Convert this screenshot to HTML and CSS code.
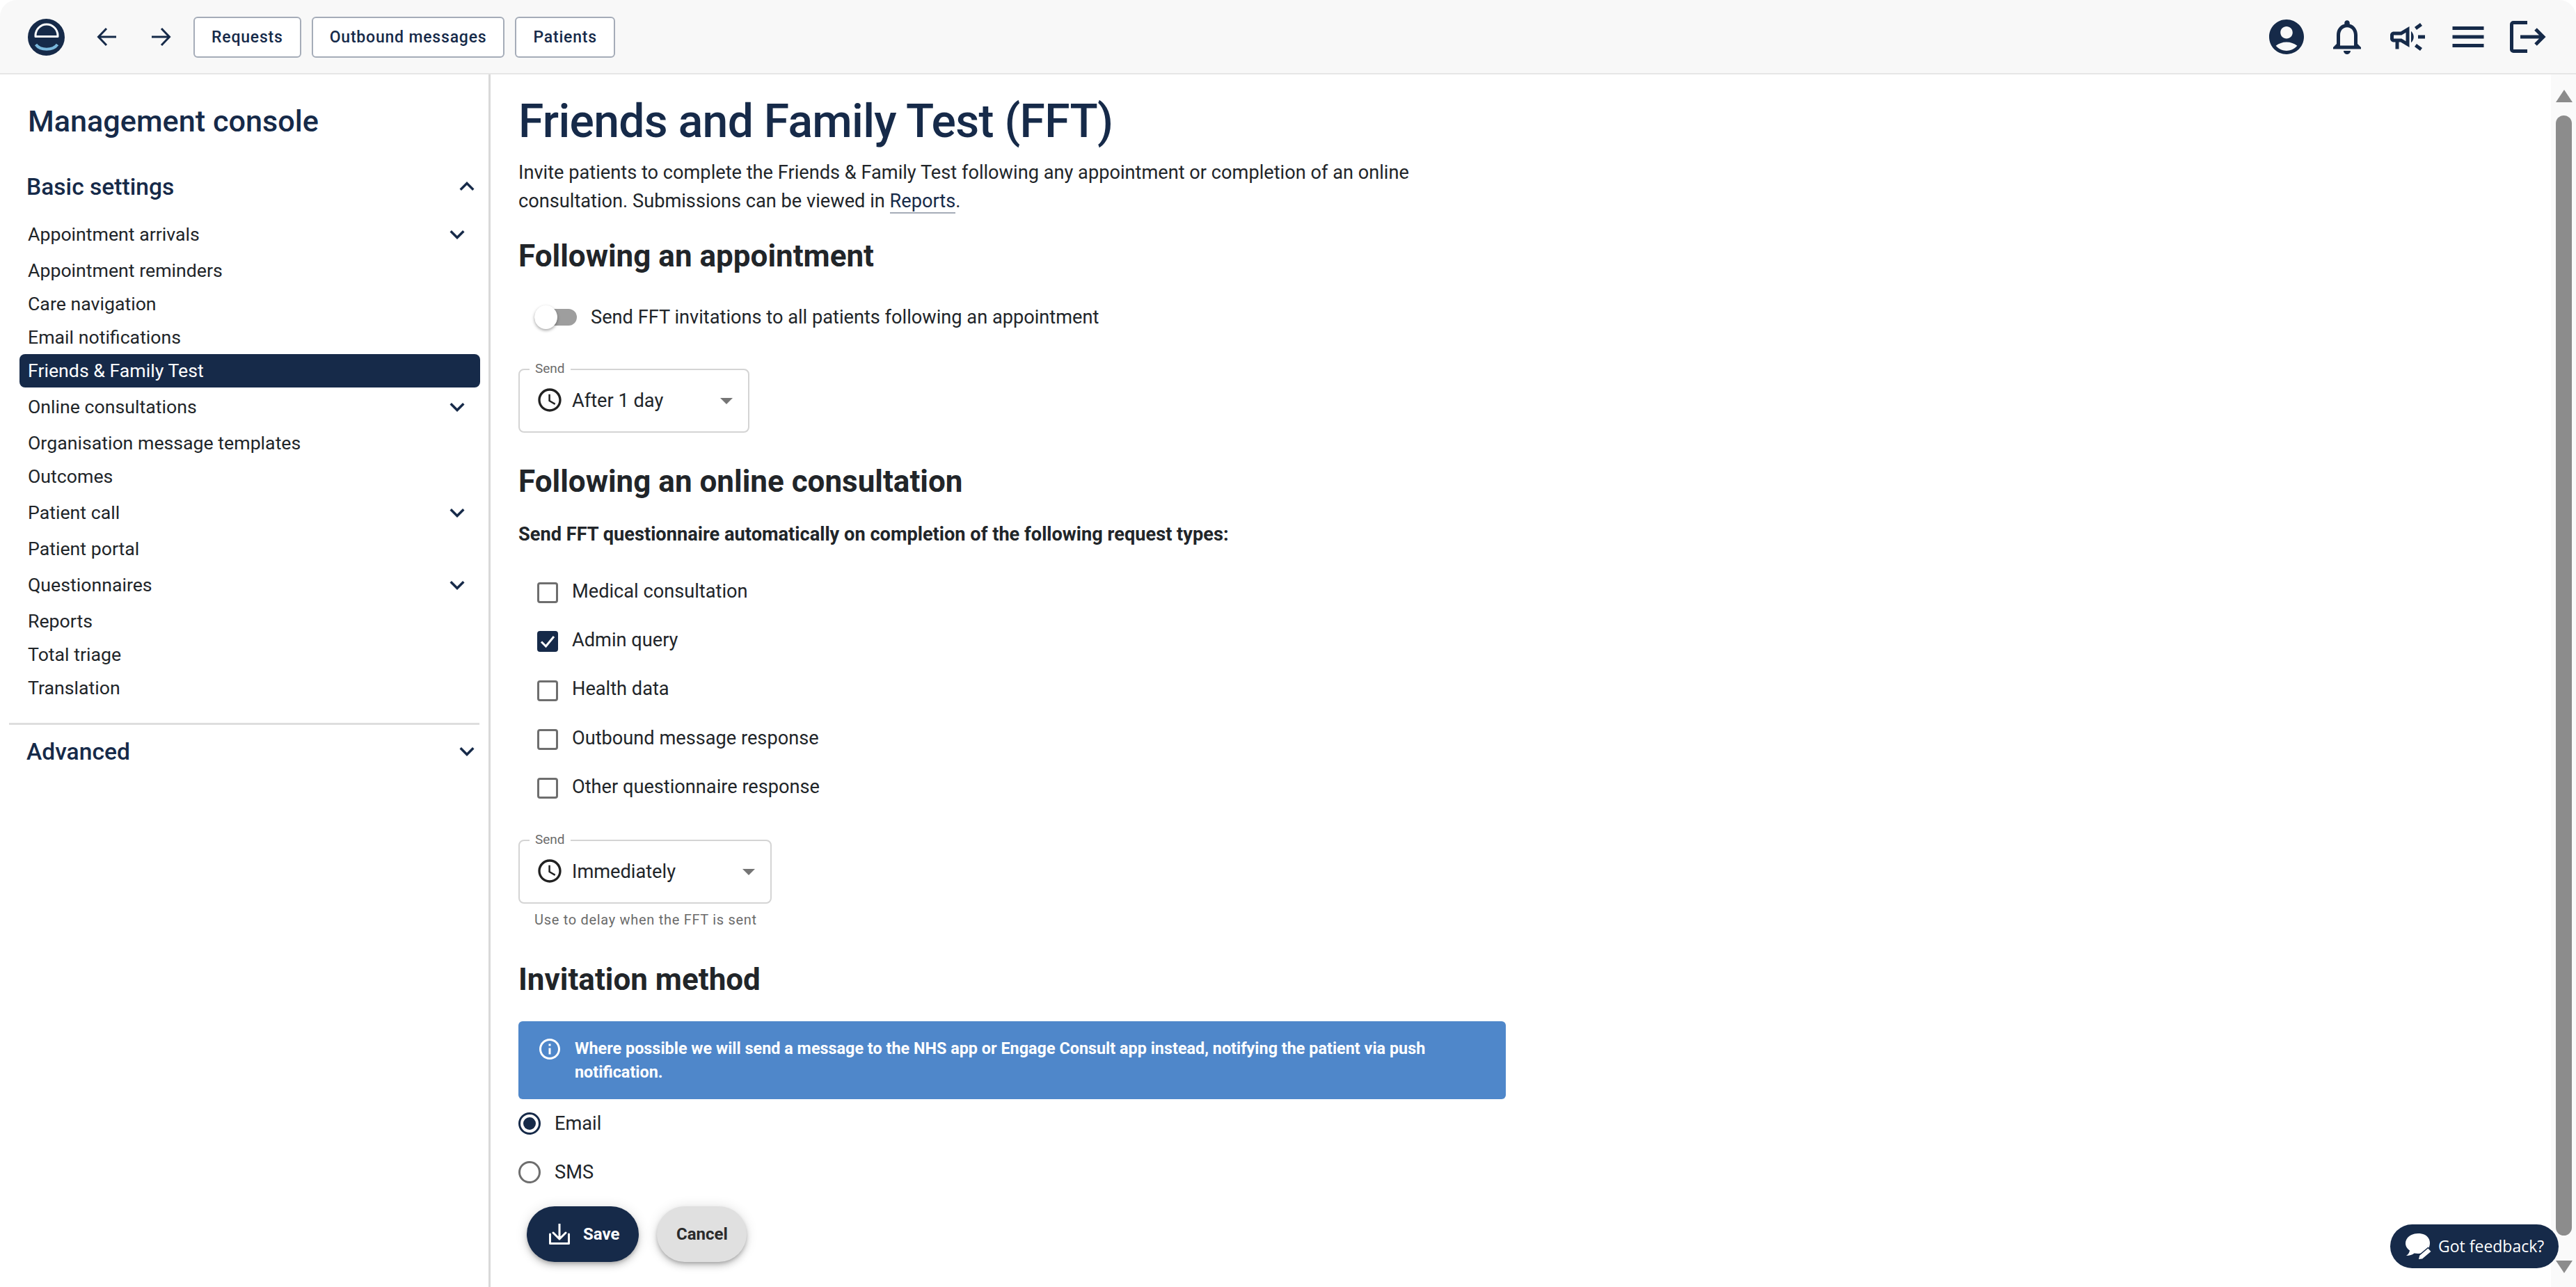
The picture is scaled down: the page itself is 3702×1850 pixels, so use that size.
FILE: index.html
```html
<!DOCTYPE html>
<html lang="en">
<head>
    <meta charset="UTF-8">
    <meta name="viewport" content="width=device-width, initial-scale=1.0">
    <title>Friends and Family Test (FFT)</title>
    <link rel="stylesheet" href="styles.css">
</head>
<body>
<div class="app">
    <header class="toolbar">
        <svg class="logo" viewBox="0 0 53 53">
            <circle cx="26.5" cy="26.5" r="26.5" fill="#162a49"/>
            <path d="M11 25.500V24A16 16 0 0 1 43 24V25.500Z" fill="none" stroke="#fff" stroke-width="3" stroke-linejoin="round"/>
            <path d="M11.500 37C18 46 36 46 42.500 37" fill="none" stroke="#7ab8dc" stroke-width="4"/>
        </svg>
        <svg class="nav-arrow" viewBox="0 0 30 28"><path d="M28 14H3M14 2 2.500 14 14 26" fill="none" stroke="#162a49" stroke-width="3"/></svg>
        <svg class="nav-arrow" viewBox="0 0 30 28"><path d="M2 14h25M16 2l11.500 12L16 26" fill="none" stroke="#162a49" stroke-width="3"/></svg>
        <div class="quick-links">
            <a class="quick-link">Requests</a>
            <a class="quick-link">Outbound messages</a>
            <a class="quick-link">Patients</a>
        </div>
        <div class="toolbar-icons">
            <svg class="top-icon" viewBox="0 0 24 24"><path d="M12 2C6.48 2 2 6.48 2 12s4.48 10 10 10 10-4.48 10-10S17.52 2 12 2zm0 4c1.93 0 3.500 1.570 3.500 3.500S13.930 13 12 13s-3.500-1.570-3.500-3.500S10.070 6 12 6zm0 14c-2.030 0-4.430-.820-6.140-2.880C7.550 15.800 9.680 15 12 15s4.450.800 6.140 2.120C16.430 19.180 14.030 20 12 20z"/></svg>
            <svg class="top-icon" viewBox="0 0 24 24"><path d="M12 22c1.100 0 2-.900 2-2h-4c0 1.100.900 2 2 2zm6-6v-5c0-3.070-1.630-5.640-4.500-6.320V4c0-.830-.670-1.500-1.500-1.500s-1.500.670-1.500 1.500v.680C7.640 5.360 6 7.920 6 11v5l-2 2v1h16v-1l-2-2zm-2 1H8v-6c0-2.480 1.510-4.500 4-4.500s4 2.020 4 4.500v6z"/></svg>
            <svg class="top-icon" viewBox="0 0 24 24"><path d="M18 11v2h4v-2h-4zm-2 6.610c.960.710 2.210 1.650 3.200 2.390.400-.530.800-1.070 1.200-1.600-.990-.740-2.240-1.680-3.200-2.400-.400.540-.800 1.080-1.200 1.610zM20.400 5.600c-.400-.530-.800-1.070-1.200-1.600-.990.740-2.240 1.680-3.200 2.400.400.530.800 1.070 1.200 1.600.960-.720 2.210-1.650 3.200-2.400zM4 9c-1.100 0-2 .900-2 2v2c0 1.100.900 2 2 2h1v4h2v-4h1l5 3V6L8 9H4zm5.030 1.710L11 9.530v4.940l-1.970-1.180-.480-.290H4v-2h4.550l.480-.290zM15.500 12c0-1.330-.580-2.530-1.500-3.350v6.690c.920-.810 1.500-2.010 1.500-3.340z"/></svg>
            <svg class="top-icon" viewBox="0 0 24 24"><path d="M3 18h18v-2H3v2zm0-5h18v-2H3v2zm0-7v2h18V6H3z"/></svg>
            <svg class="logout-icon" viewBox="0 0 52 46"><path d="M25 2.500H5a2.500 2.500 0 0 0-2.500 2.500v36A2.500 2.500 0 0 0 5 43.500h20M15 23h33M37 12l11 11-11 11" fill="none" stroke="#162a49" stroke-width="5"/></svg>
        </div>
    </header>

    <div class="workspace">
        <aside class="sidebar">
            <div class="sidebar-title">Management console</div>
            <div class="section-head">
                <span>Basic settings</span>
                <svg class="chevron" viewBox="0 0 24 24"><path d="M7.410 15.410 12 10.830l4.590 4.580L18 14l-6-6-6 6z"/></svg>
            </div>
            <div class="menu">
                <div class="menu-item has-children">Appointment arrivals<svg class="chevron" viewBox="0 0 24 24"><path d="M16.590 8.590 12 13.170 7.410 8.590 6 10l6 6 6-6z"/></svg></div>
                <div class="menu-item">Appointment reminders</div>
                <div class="menu-item">Care navigation</div>
                <div class="menu-item">Email notifications</div>
                <div class="menu-item active">Friends &amp; Family Test</div>
                <div class="menu-item has-children">Online consultations<svg class="chevron" viewBox="0 0 24 24"><path d="M16.590 8.590 12 13.170 7.410 8.590 6 10l6 6 6-6z"/></svg></div>
                <div class="menu-item">Organisation message templates</div>
                <div class="menu-item">Outcomes</div>
                <div class="menu-item has-children">Patient call<svg class="chevron" viewBox="0 0 24 24"><path d="M16.590 8.590 12 13.170 7.410 8.590 6 10l6 6 6-6z"/></svg></div>
                <div class="menu-item">Patient portal</div>
                <div class="menu-item has-children">Questionnaires<svg class="chevron" viewBox="0 0 24 24"><path d="M16.590 8.590 12 13.170 7.410 8.590 6 10l6 6 6-6z"/></svg></div>
                <div class="menu-item">Reports</div>
                <div class="menu-item">Total triage</div>
                <div class="menu-item">Translation</div>
            </div>
            <div class="sidebar-divider"></div>
            <div class="section-head advanced">
                <span>Advanced</span>
                <svg class="chevron" viewBox="0 0 24 24"><path d="M16.590 8.590 12 13.170 7.410 8.590 6 10l6 6 6-6z"/></svg>
            </div>
        </aside>

        <main class="content">
            <h1>Friends and Family Test (FFT)</h1>
            <p class="intro">Invite patients to complete the Friends &amp; Family Test following any appointment or completion of an online<br>consultation. Submissions can be viewed in <a class="link">Reports</a>.</p>

            <h2 class="first-heading">Following an appointment</h2>
            <div class="toggle-row">
                <span class="toggle"><span class="toggle-thumb"></span></span>
                <span>Send FFT invitations to all patients following an appointment</span>
            </div>
            <div class="select select-short">
                <span class="select-label">Send</span>
                <svg class="clock" viewBox="0 0 24 24"><path d="M11.990 2C6.470 2 2 6.480 2 12s4.470 10 9.990 10C17.520 22 22 17.520 22 12S17.520 2 11.990 2zM12 20c-4.420 0-8-3.580-8-8s3.580-8 8-8 8 3.580 8 8-3.580 8-8 8zm.500-13H11v6l5.250 3.150.750-1.230-4.500-2.670z"/></svg>
                <span class="select-value">After 1 day</span>
                <span class="caret"></span>
            </div>

            <h2 class="online-heading">Following an online consultation</h2>
            <p class="lead">Send FFT questionnaire automatically on completion of the following request types:</p>
            <div class="checks">
                <div class="check-row"><span class="checkbox"></span><span class="check-label">Medical consultation</span></div>
                <div class="check-row"><span class="checkbox checked"><svg viewBox="0 0 24 24"><path d="M3 12.500 9.500 19 21 5" fill="none" stroke="#fff" stroke-width="3"/></svg></span><span class="check-label">Admin query</span></div>
                <div class="check-row"><span class="checkbox"></span><span class="check-label">Health data</span></div>
                <div class="check-row"><span class="checkbox"></span><span class="check-label">Outbound message response</span></div>
                <div class="check-row"><span class="checkbox"></span><span class="check-label">Other questionnaire response</span></div>
            </div>
            <div class="select select-long">
                <span class="select-label">Send</span>
                <svg class="clock" viewBox="0 0 24 24"><path d="M11.990 2C6.470 2 2 6.480 2 12s4.470 10 9.990 10C17.520 22 22 17.520 22 12S17.520 2 11.990 2zM12 20c-4.420 0-8-3.580-8-8s3.580-8 8-8 8 3.580 8 8-3.580 8-8 8zm.500-13H11v6l5.250 3.150.750-1.230-4.500-2.670z"/></svg>
                <span class="select-value">Immediately</span>
                <span class="caret"></span>
            </div>
            <div class="hint">Use to delay when the FFT is sent</div>

            <h2 class="method-heading">Invitation method</h2>
            <div class="banner">
                <svg class="info-icon" viewBox="0 0 24 24"><path d="M11 7h2v2h-2zm0 4h2v6h-2zm1-9C6.480 2 2 6.480 2 12s4.480 10 10 10 10-4.480 10-10S17.520 2 12 2zm0 18c-4.410 0-8-3.590-8-8s3.590-8 8-8 8 3.590 8 8-3.590 8-8 8z"/></svg>
                <span>Where possible we will send a message to the NHS app or Engage Consult app instead, notifying the patient via push notification.</span>
            </div>
            <div class="radio-row"><span class="radio selected"></span><span>Email</span></div>
            <div class="radio-row"><span class="radio"></span><span>SMS</span></div>
            <div class="actions">
                <button class="btn btn-save" type="button">
                    <svg class="save-icon" viewBox="0 0 30 30"><path d="M1.500 15v13.500h27V15M15 0v22M6 13l9 9 9-9" fill="none" stroke="#fff" stroke-width="3" stroke-linecap="round" stroke-linejoin="round"/></svg>
                    Save
                </button>
                <button class="btn btn-cancel" type="button">Cancel</button>
            </div>
        </main>

        <div class="scrollbar">
            <span class="scroll-up"></span>
            <span class="scroll-thumb"></span>
            <span class="scroll-down"></span>
        </div>
    </div>

    <a class="feedback">
        <svg class="feedback-icon" viewBox="0 0 40 40">
            <path d="M20 1C9.500 1 2 7.500 2 15c0 4.500 2.500 8 6 10.500C7.500 28.500 6 31 3 33c5 0 9-1.500 11.500-3.500 1.800.300 3.500.500 5.500.500 10.500 0 17-6.500 17-15S30.500 1 20 1z" fill="#fff"/>
            <path d="M20 39l1.500-6.500 13-11 5 5.500-13 11z" fill="#fff" stroke="#162a49" stroke-width="1.500"/>
        </svg>
        Got feedback?
    </a>
</div>
</body>
</html>
```

FILE: styles.css
```css
* { box-sizing: border-box; }

body {
    margin: 0;
    background: #fff;
    font-family: Roboto, Arial, sans-serif;
    font-size: 27.2px;
    line-height: 41px;
    color: #212529;
}

.app {
    position: relative;
    height: 1850px;
    display: flex;
    flex-direction: column;
    overflow: hidden;
}

/* top bar */
.toolbar {
    height: 107px;
    flex: none;
    display: flex;
    align-items: center;
    padding: 1px 43px 0 40px;
    background: #f8f8f8;
    border-bottom: 2px solid #e6e6e6;
    border-radius: 24px 24px 0 0;
}
.logo { width: 53px; height: 53px; margin-right: 46px; }
.nav-arrow { width: 30px; height: 28px; margin-right: 47px; }
.nav-arrow + .nav-arrow { margin-right: 32px; }
.quick-links { display: flex; gap: 15px; }
.quick-link {
    height: 59px;
    padding: 0 24px;
    display: flex;
    align-items: center;
    background: #fff;
    border: 2px solid #a5acb8;
    border-radius: 6px;
    font-size: 23px;
    font-weight: 500;
    letter-spacing: 0.8px;
    color: #162a49;
}
.toolbar-icons { margin-left: auto; display: flex; align-items: center; gap: 27px; }
.top-icon { width: 60px; height: 60px; fill: #162a49; }
.logout-icon { width: 52px; height: 46px; margin-left: 3px; }

.workspace { flex: 1; display: flex; min-height: 0; }

/* left menu */
.sidebar {
    width: 705px;
    flex: none;
    padding: 38px 0 0 13px;
    border-right: 3px solid #d9d9d9;
}
.sidebar-title {
    margin-left: 27px;
    font-size: 43.2px;
    font-weight: 500;
    line-height: 60px;
    color: #162a49;
}
.section-head {
    display: flex;
    align-items: center;
    justify-content: space-between;
    margin-top: 38px;
    padding: 0 10px 0 25px;
    height: 50px;
    font-size: 33.6px;
    font-weight: 500;
    color: #162a49;
}
.chevron { width: 42px; height: 42px; fill: #162a49; flex: none; }
.menu { margin: 16px 12px 0 15px; }
.menu-item {
    height: 48px;
    display: flex;
    align-items: center;
    justify-content: space-between;
    padding: 0 12px;
    font-size: 26.7px;
    border-radius: 8px;
}
.menu-item.has-children { height: 56px; }
.menu-item.active { background: #162a49; color: #fff; }
.sidebar-divider {
    height: 3px;
    margin: 26px 13px 0 0;
    background: #dedede;
}
.section-head.advanced { margin-top: 13px; }

/* main form */
.content {
    flex: 1;
    min-width: 0;
    padding: 28px 0 0 40px;
}
h1 {
    margin: 0 0 13px;
    font-size: 66px;
    line-height: 80px;
    font-weight: 500;
    letter-spacing: -0.7px;
    color: #162a49;
}
h2 {
    margin: 0;
    font-size: 44px;
    line-height: 50px;
    font-weight: 700;
    color: #212529;
}
.intro { margin: 0; }
.link { color: #162a49; border-bottom: 2px solid #a5acb8; }
.first-heading { margin-top: 33px; }
.online-heading { margin-top: 45px; }
.method-heading { margin-top: 47px; }

.toggle-row {
    height: 50px;
    margin-top: 38px;
    padding-left: 23px;
    display: flex;
    align-items: center;
    gap: 20px;
}
.toggle {
    position: relative;
    width: 61px;
    height: 24px;
    background: #9e9e9e;
    border-radius: 12px;
}
.toggle-thumb {
    position: absolute;
    left: 0;
    top: -5px;
    width: 33px;
    height: 34px;
    border-radius: 50%;
    background: #fff;
    box-shadow: 0 2px 4px rgba(0,0,0,0.35);
}

.select {
    position: relative;
    height: 92px;
    padding: 25px 0 0 23px;
    display: flex;
    align-items: flex-start;
    border: 2px solid #d4d4d4;
    border-radius: 8px;
}
.select-short { width: 332px; margin-top: 49px; }
.select-long { width: 364px; margin-top: 39px; }
.select-label {
    position: absolute;
    left: 14px;
    top: -15px;
    padding: 0 8px;
    background: #fff;
    font-size: 19px;
    line-height: 26px;
    color: #6b6b6b;
}
.clock { width: 40px; height: 40px; margin-top: -2px; fill: #212121; }
.select-value { margin-left: 12px; line-height: 38px; }
.caret {
    position: absolute;
    right: 22px;
    top: 40px;
    border-left: 9px solid transparent;
    border-right: 9px solid transparent;
    border-top: 9px solid #757575;
}

.lead { margin: 31px 0 0; font-weight: 700; }
.checks { margin-top: 28px; }
.check-row {
    height: 70.3px;
    padding-left: 27px;
    display: flex;
    align-items: center;
    gap: 20px;
}
.check-label { position: relative; top: -2px; }
.checkbox {
    width: 30px;
    height: 30px;
    border: 3px solid #6e6e6e;
    border-radius: 4px;
    flex: none;
}
.checkbox.checked { background: #162a49; border-color: #162a49; }
.checkbox svg { display: block; width: 24px; height: 24px; }

.hint {
    margin: 9px 0 0 23px;
    font-size: 20px;
    line-height: 28px;
    letter-spacing: 0.7px;
    color: #6b6b6b;
}

.banner {
    width: 1419px;
    height: 112px;
    margin-top: 35px;
    padding: 22px 40px 0 27px;
    display: flex;
    gap: 18px;
    background: #4f87ca;
    border-radius: 6px;
    color: #fff;
    font-size: 23.4px;
    line-height: 34px;
    font-weight: 700;
}
.info-icon { width: 36px; height: 36px; flex: none; fill: #fff; }

.radio-row {
    height: 70px;
    display: flex;
    align-items: center;
    gap: 20px;
}
.radio {
    position: relative;
    width: 32px;
    height: 32px;
    border: 3px solid #6e6e6e;
    border-radius: 50%;
    flex: none;
}
.radio.selected { border-color: #162a49; }
.radio.selected::after {
    content: "";
    position: absolute;
    inset: 4px;
    background: #162a49;
    border-radius: 50%;
}

.actions { margin: 14px 0 0 12px; display: flex; gap: 26px; }
.btn {
    height: 80px;
    padding: 0 28px;
    display: flex;
    align-items: center;
    gap: 19px;
    border: none;
    border-radius: 40px;
    font-family: inherit;
    font-size: 24px;
    font-weight: 700;
    box-shadow: 0 3px 5px -1px rgba(0,0,0,0.2), 0 6px 10px 0 rgba(0,0,0,0.14), 0 1px 18px 0 rgba(0,0,0,0.12);
}
.btn-save { width: 161px; padding-left: 32px; background: #162a49; color: #fff; }
.btn-cancel { width: 129px; background: #e0e0e0; color: #2b2b2b; }
.save-icon { width: 30px; height: 30px; flex: none; }

/* fake scrollbar at the right edge */
.scrollbar {
    width: 36px;
    flex: none;
    padding: 22px 5px 20px 6px;
    display: flex;
    flex-direction: column;
    align-items: center;
    background: #fafafa;
}
.scroll-up, .scroll-down {
    width: 0;
    height: 0;
    border-left: 12px solid transparent;
    border-right: 12px solid transparent;
    flex: none;
}
.scroll-up { border-bottom: 18px solid #8c8c8c; }
.scroll-down { border-top: 18px solid #8c8c8c; }
.scroll-thumb {
    width: 23px;
    flex: 1;
    margin: 19px 0 36px;
    background: #8c8c8c;
    border-radius: 12px;
}

.feedback {
    position: absolute;
    left: 3435px;
    top: 1760px;
    width: 242px;
    height: 63px;
    padding-left: 20px;
    display: flex;
    align-items: center;
    gap: 9px;
    background: #162a49;
    border-radius: 32px;
    font-family: "Open Sans", Arial, sans-serif;
    font-size: 23px;
    color: #fff;
}
.feedback-icon { width: 40px; height: 40px; flex: none; }
```
